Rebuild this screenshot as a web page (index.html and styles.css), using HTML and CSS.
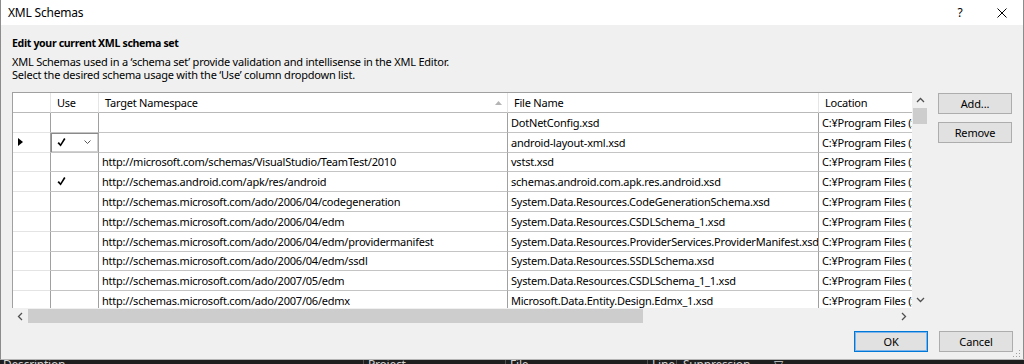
FILE: index.html
```html
<!DOCTYPE html>
<html lang="en">
<head>
    <meta charset="UTF-8">
    <title>XML Schemas</title>
    <link rel="stylesheet" href="styles.css">
</head>
<body>
    <div class="dialog">
        <div class="titlebar">
            <span class="title">XML Schemas</span>
            <span class="help">?</span>
            <span class="close">
                <svg width="10" height="10" viewBox="0 0 10 10"><path d="M0.5 0.5 L9.5 9.5 M9.5 0.5 L0.5 9.5" stroke="#000" stroke-width="1" fill="none"/></svg>
            </span>
        </div>
        <div class="content">
            <h1>Edit your current XML schema set</h1>
            <p class="desc">XML Schemas used in a ‘schema set’ provide validation and intellisense in the XML Editor.<br>Select the desired schema usage with the ‘Use’ column dropdown list.</p>
            <div class="main">
                <div class="grid">
                    <div class="grid-body">
                        <div class="row head">
                            <div class="cell rh"></div>
                            <div class="cell">Use</div>
                            <div class="cell sorted">Target Namespace
                                <svg class="sort" width="7" height="4" viewBox="0 0 7 4"><polygon points="0,4 3.5,0 7,4" fill="#b4b4b4"/></svg>
                            </div>
                            <div class="cell">File Name</div>
                            <div class="cell">Location</div>
                        </div>
                        <div class="row">
                            <div class="cell rh"></div>
                            <div class="cell"></div>
                            <div class="cell"></div>
                            <div class="cell">DotNetConfig.xsd</div>
                            <div class="cell">C:¥Program Files (x86)¥Microsoft Visual Studio</div>
                        </div>
                        <div class="row">
                            <div class="cell rh"><span class="marker"></span></div>
                            <div class="cell use combo">
                                <svg class="check" width="9" height="9" viewBox="0 0 8 9"><polygon points="0,5.2 1.4,4 3,6 6.6,0 8,0.9 3.2,8.6" fill="#000"/></svg>
                                <svg class="drop" width="7" height="4" viewBox="0 0 7 4"><polyline points="0.5,0.5 3.5,3.5 6.5,0.5" fill="none" stroke="#555" stroke-width="1"/></svg>
                            </div>
                            <div class="cell"></div>
                            <div class="cell">android-layout-xml.xsd</div>
                            <div class="cell">C:¥Program Files (x86)¥Microsoft Visual Studio</div>
                        </div>
                        <div class="row">
                            <div class="cell rh"></div>
                            <div class="cell"></div>
                            <div class="cell">http://microsoft.com/schemas/VisualStudio/TeamTest/2010</div>
                            <div class="cell">vstst.xsd</div>
                            <div class="cell">C:¥Program Files (x86)¥Microsoft Visual Studio</div>
                        </div>
                        <div class="row">
                            <div class="cell rh"></div>
                            <div class="cell use">
                                <svg class="check" width="9" height="9" viewBox="0 0 8 9"><polygon points="0,5.2 1.4,4 3,6 6.6,0 8,0.9 3.2,8.6" fill="#000"/></svg>
                            </div>
                            <div class="cell">http://schemas.android.com/apk/res/android</div>
                            <div class="cell">schemas.android.com.apk.res.android.xsd</div>
                            <div class="cell">C:¥Program Files (x86)¥Microsoft Visual Studio</div>
                        </div>
                        <div class="row">
                            <div class="cell rh"></div>
                            <div class="cell"></div>
                            <div class="cell">http://schemas.microsoft.com/ado/2006/04/codegeneration</div>
                            <div class="cell">System.Data.Resources.CodeGenerationSchema.xsd</div>
                            <div class="cell">C:¥Program Files (x86)¥Microsoft Visual Studio</div>
                        </div>
                        <div class="row">
                            <div class="cell rh"></div>
                            <div class="cell"></div>
                            <div class="cell">http://schemas.microsoft.com/ado/2006/04/edm</div>
                            <div class="cell">System.Data.Resources.CSDLSchema_1.xsd</div>
                            <div class="cell">C:¥Program Files (x86)¥Microsoft Visual Studio</div>
                        </div>
                        <div class="row">
                            <div class="cell rh"></div>
                            <div class="cell"></div>
                            <div class="cell">http://schemas.microsoft.com/ado/2006/04/edm/providermanifest</div>
                            <div class="cell">System.Data.Resources.ProviderServices.ProviderManifest.xsd</div>
                            <div class="cell">C:¥Program Files (x86)¥Microsoft Visual Studio</div>
                        </div>
                        <div class="row">
                            <div class="cell rh"></div>
                            <div class="cell"></div>
                            <div class="cell">http://schemas.microsoft.com/ado/2006/04/edm/ssdl</div>
                            <div class="cell">System.Data.Resources.SSDLSchema.xsd</div>
                            <div class="cell">C:¥Program Files (x86)¥Microsoft Visual Studio</div>
                        </div>
                        <div class="row">
                            <div class="cell rh"></div>
                            <div class="cell"></div>
                            <div class="cell">http://schemas.microsoft.com/ado/2007/05/edm</div>
                            <div class="cell">System.Data.Resources.CSDLSchema_1_1.xsd</div>
                            <div class="cell">C:¥Program Files (x86)¥Microsoft Visual Studio</div>
                        </div>
                        <div class="row">
                            <div class="cell rh"></div>
                            <div class="cell"></div>
                            <div class="cell">http://schemas.microsoft.com/ado/2007/06/edmx</div>
                            <div class="cell">Microsoft.Data.Entity.Design.Edmx_1.xsd</div>
                            <div class="cell">C:¥Program Files (x86)¥Microsoft Visual Studio</div>
                        </div>
                    </div>
                    <div class="vscroll">
                        <div class="arrow">
                            <svg width="9" height="6" viewBox="0 0 9 6"><polyline points="1,5 4.5,1.5 8,5" fill="none" stroke="#505050" stroke-width="1.3"/></svg>
                        </div>
                        <div class="thumb"></div>
                        <div class="track"></div>
                        <div class="arrow">
                            <svg width="9" height="6" viewBox="0 0 9 6"><polyline points="1,1 4.5,4.5 8,1" fill="none" stroke="#505050" stroke-width="1.3"/></svg>
                        </div>
                    </div>
                    <div class="hscroll">
                        <div class="arrow">
                            <svg width="6" height="9" viewBox="0 0 6 9"><polyline points="5,1 1.5,4.5 5,8" fill="none" stroke="#505050" stroke-width="1.3"/></svg>
                        </div>
                        <div class="thumb"></div>
                        <div class="track"></div>
                        <div class="arrow">
                            <svg width="6" height="9" viewBox="0 0 6 9"><polyline points="1,1 4.5,4.5 1,8" fill="none" stroke="#505050" stroke-width="1.3"/></svg>
                        </div>
                    </div>
                    <div class="corner"></div>
                </div>
                <div class="side">
                    <button class="btn">Add...</button>
                    <button class="btn">Remove</button>
                </div>
            </div>
            <div class="footer">
                <button class="btn default">OK</button>
                <button class="btn">Cancel</button>
            </div>
        </div>
        <svg class="grip" width="8" height="8" viewBox="0 0 8 8">
            <rect x="6" y="0" width="1" height="1" fill="#a0a0a0"/>
            <rect x="3" y="3" width="1" height="1" fill="#a0a0a0"/>
            <rect x="6" y="3" width="1" height="1" fill="#a0a0a0"/>
            <rect x="0" y="6" width="1" height="1" fill="#a0a0a0"/>
            <rect x="3" y="6" width="1" height="1" fill="#a0a0a0"/>
            <rect x="6" y="6" width="1" height="1" fill="#a0a0a0"/>
        </svg>
    </div>
    <div class="errorlist">
        <div class="errorlist-row">
            <span class="col desc-col">Description</span>
            <span class="col project-col">Project</span>
            <span class="col file-col">File</span>
            <span class="col line-col">Line</span>
            <span class="col supp-col">Suppression St...</span>
            <span class="col filter-col">▽</span>
        </div>
    </div>
</body>
</html>
```

FILE: styles.css
```css
body {
    margin: 0;
    width: 1024px;
    height: 364px;
    overflow: hidden;
    background-color: #1e1e1e;
    font-family: "Noto Sans", "Open Sans", sans-serif;
    font-size: 11px;
    letter-spacing: -0.22px;
    color: #000;
}
.dialog {
    position: relative;
    width: 1024px;
    height: 360px;
    box-sizing: border-box;
    border-left: 1px solid #8c8c8c;
    border-right: 1px solid #8c8c8c;
    border-bottom: 1px solid #b4b4b4;
    background-color: #f0f0f0;
}
.titlebar {
    height: 25px;
    background-color: #fff;
    display: flex;
    align-items: center;
    padding-left: 7px;
    font-size: 12px;
    letter-spacing: -0.2px;
}
.titlebar .title {
    flex: 1;
}
.help {
    width: 14px;
    text-align: center;
    margin-right: 30px;
    font-size: 12px;
}
.close {
    width: 10px;
    height: 10px;
    margin-right: 16px;
    display: flex;
}
.content {
    padding: 0 10px 0 11px;
}
h1 {
    margin: 10px 0 0;
    font-size: 10.6px;
    font-weight: bold;
    line-height: 16px;
    letter-spacing: -0.35px;
}
.desc {
    margin: 4px 0 0;
    line-height: 13px;
}
.main {
    display: flex;
    gap: 10px;
    margin-top: 11px;
}
.grid {
    display: grid;
    grid-template-columns: 900px 16px;
    grid-template-rows: 216px 16px;
}
.grid-body {
    box-sizing: border-box;
    border-left: 1px solid #a0a0a0;
    border-top: 1px solid #a0a0a0;
    background-color: #fff;
    overflow: hidden;
}
.row {
    display: grid;
    grid-template-columns: 38px 48px 409px 311px 240px;
    height: 19.8px;
}
.row.head {
    height: 20px;
}
.cell {
    box-sizing: border-box;
    display: flex;
    align-items: center;
    padding-left: 3px;
    border-right: 1px solid #a0a0a0;
    border-bottom: 1px solid #c4c4c4;
    white-space: nowrap;
    overflow: hidden;
}
.cell.rh {
    border-bottom-color: #e4e4e4;
    padding-left: 5px;
}
.head .cell {
    padding-left: 6px;
    border-right-color: #e5e5e5;
    border-bottom-color: #b9b9b9;
}
.head .cell.rh {
    border-right-color: #e5e5e5;
}
.head .sorted {
    justify-content: space-between;
    padding-right: 5px;
}
.marker {
    width: 0;
    height: 0;
    border-top: 4px solid transparent;
    border-bottom: 4px solid transparent;
    border-left: 5px solid #000;
}
.cell.use {
    padding-left: 6px;
}
.cell.combo {
    justify-content: space-between;
    padding-right: 7px;
    box-shadow: inset 1px 1px 0 #8a8a8a, inset -1px -1px 0 #d0d0d0;
}
.vscroll {
    display: flex;
    flex-direction: column;
}
.vscroll .arrow {
    height: 16px;
    display: flex;
    align-items: center;
    justify-content: center;
}
.vscroll .thumb {
    height: 16px;
    margin: 0 1px;
    background-color: #cdcdcd;
}
.vscroll .track {
    flex: 1;
}
.hscroll {
    display: flex;
}
.hscroll .arrow {
    width: 16px;
    display: flex;
    align-items: center;
    justify-content: center;
}
.hscroll .thumb {
    width: 615px;
    margin: 1px 0;
    background-color: #cdcdcd;
}
.hscroll .track {
    flex: 1;
}
.side {
    display: flex;
    flex-direction: column;
    gap: 8px;
    padding-top: 1px;
}
.btn {
    width: 74px;
    height: 21px;
    padding: 0;
    line-height: 15px;
    background-color: #e1e1e1;
    border: 1px solid #adadad;
    font-family: "Noto Sans", "Open Sans", sans-serif;
    font-size: 11px;
    letter-spacing: -0.15px;
    color: #000;
}
.btn.default {
    border-color: #0078d7;
    box-shadow: inset 0 0 0 1px #7eb4ea;
}
.footer {
    display: flex;
    justify-content: flex-end;
    gap: 11px;
    margin-top: 7px;
}
.grip {
    position: absolute;
    right: 2px;
    bottom: 1px;
}
.errorlist {
    height: 4px;
    overflow: hidden;
    background-color: #1e1e1e;
}
.errorlist-row {
    display: flex;
    margin-top: -3px;
    font-size: 12px;
    line-height: 16px;
    color: #d0d0d0;
}
.col {
    box-sizing: border-box;
    border-left: 1px solid #505050;
    padding-left: 4px;
}
.desc-col {
    width: 363px;
    border-left: none;
    padding-left: 3px;
}
.project-col {
    width: 142px;
}
.file-col {
    width: 142px;
}
.line-col {
    width: 29px;
}
.supp-col {
    width: 94px;
    padding-left: 6px;
}
.filter-col {
    border-left: none;
}
```
